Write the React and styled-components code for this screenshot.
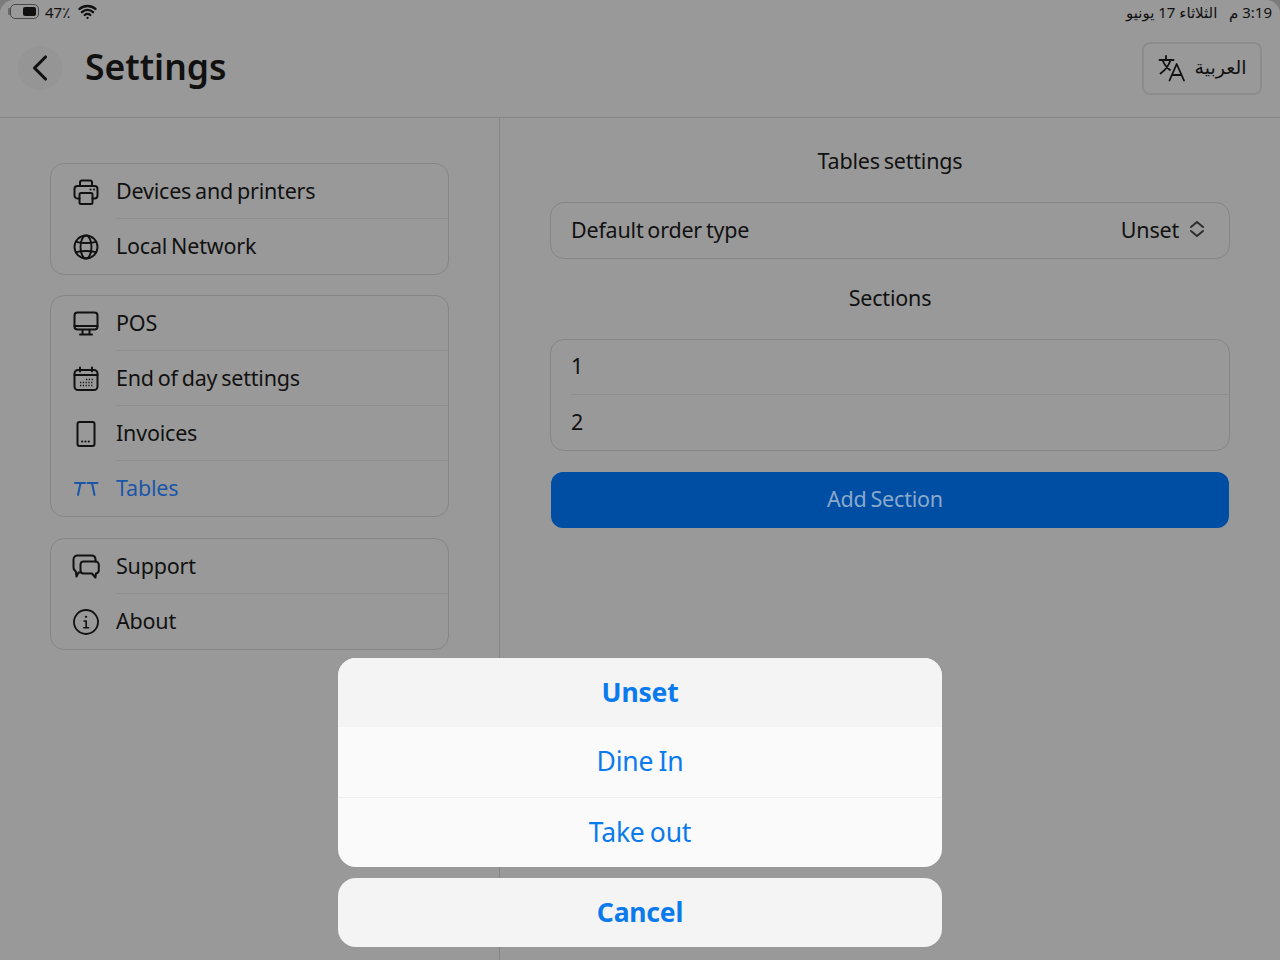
import styled, { createGlobalStyle } from 'styled-components';
import { ChevronLeft, Wifi } from 'lucide-react';

const GlobalStyle = createGlobalStyle`
  html, body {
    margin: 0;
    padding: 0;
    background: #7c7c7c;
  }
  * {
    box-sizing: border-box;
  }
`;

const Icon = ({ children, strokeWidth = 2 }) => (
  <svg width="28" height="28" viewBox="0 0 28 28" fill="none" stroke="currentColor" strokeWidth={strokeWidth} strokeLinecap="round" strokeLinejoin="round">
    {children}
  </svg>
);

const PrinterIcon = () => (
  <Icon>
    <path d="M8 8V4.500c0-1.200.8-2 2-2h8c1.200 0 2 .8 2 2V8" />
    <path d="M7.500 20.500H5.500c-1.800 0-3-1.300-3-3V11c0-1.800 1.300-3 3-3h17c1.800 0 3 1.200 3 3v6.500c0 1.700-1.200 3-3 3h-2" />
    <rect x="7.500" y="15" width="13" height="11" rx="1.500" />
    <path d="M18.500 11.500h.1M22 11.500h.1" />
  </Icon>
);

const GlobeIcon = () => (
  <Icon strokeWidth={1.9}>
    <circle cx="14" cy="14" r="11.500" />
    <ellipse cx="14" cy="14" rx="5.500" ry="11.500" />
    <path d="M4 8.800c6 1.500 14 1.500 20 0M4 19.200c6-1.500 14-1.500 20 0" />
  </Icon>
);

const MonitorIcon = () => (
  <Icon>
    <rect x="2.500" y="2.500" width="23" height="17" rx="3" />
    <path d="M2.500 16h23M10.500 20v4M17.500 20v4M8 24.500h12" />
  </Icon>
);

const CalendarIcon = () => (
  <Icon>
    <rect x="2.500" y="5" width="23" height="20" rx="3.500" />
    <path d="M8 2.500v4M20 2.500v4M2.500 10h23" />
    <path strokeWidth="1.400" strokeLinecap="butt" strokeDasharray="1.200 1.600" d="M8 20.500h13M8 17.500h13M14 14.500h7" />
  </Icon>
);

const TabletIcon = () => (
  <Icon>
    <rect x="5.500" y="2" width="17" height="24" rx="2" />
    <path strokeWidth="1.800" strokeDasharray="0.300 3" d="M10 21.500h8" />
  </Icon>
);

const TableIcon = () => (
  <Icon>
    <path d="M3 8h10M15.500 8h10M8.500 8l-2.500 12M20 8l2.500 12" />
  </Icon>
);

const SupportIcon = () => (
  <Icon>
    <path d="M8 19.500H6.500l-2 4-.7-5.200C2.300 17.500 1.500 16 1.500 14V6.500c0-2.500 2-4 4-4h14c2.500 0 4 1.800 4 4v2" />
    <path d="M11.500 8.500h12c1.800 0 3.300 1.500 3.300 3.300v5.400c0 1.800-1.300 3-2.800 3.300l-.6 4-3.400-4h-8.500c-1.800 0-3-1.500-3-3.300v-5.400c0-1.800 1.200-3.300 3-3.300z" />
  </Icon>
);

const InfoIcon = () => (
  <Icon strokeWidth={1.800}>
    <circle cx="14" cy="14" r="12" />
    <path strokeWidth="2.200" d="M14 8.800h.1" />
    <path strokeWidth="1.600" d="M12 13h2.200v6.500M11.800 19.700h4.800" />
  </Icon>
);

const TranslateIcon = () => (
  <Icon strokeWidth={1.800}>
    <path d="M1.500 6h14M8 2v4M12.500 6C11 11 7.500 16 2.500 19.500M4.500 6c1.500 4 4 7.500 7.500 10" />
    <path d="M11.500 26.500L18.700 10l7.300 16.500M14 21h9.500" />
  </Icon>
);

const UpDownIcon = () => (
  <svg width="16" height="18" viewBox="0 0 16 18" fill="none" stroke="#2e2e2e" strokeWidth="2" strokeLinecap="round" strokeLinejoin="round">
    <path d="M2 7l6-5 6 5M2 11l6 5 6-5" />
  </svg>
);

const navGroups = [
  [
    { label: 'Devices and printers', icon: <PrinterIcon /> },
    { label: 'Local Network', icon: <GlobeIcon /> },
  ],
  [
    { label: 'POS', icon: <MonitorIcon /> },
    { label: 'End of day settings', icon: <CalendarIcon /> },
    { label: 'Invoices', icon: <TabletIcon /> },
    { label: 'Tables', icon: <TableIcon />, active: true },
  ],
  [
    { label: 'Support', icon: <SupportIcon /> },
    { label: 'About', icon: <InfoIcon /> },
  ],
];

function App() {
  return (
    <Screen>
      <GlobalStyle />
      <StatusBar>
        <StatusLeft>
          <Battery>
            <BatteryFill />
          </Battery>
          <span>47٪</span>
          <Wifi size={19} strokeWidth={3} />
        </StatusLeft>
        <StatusClock dir="rtl">3:19 م &nbsp; الثلاثاء 17 يونيو</StatusClock>
      </StatusBar>

      <Header>
        <BackButton>
          <ChevronLeft size={50} strokeWidth={1.7} />
        </BackButton>
        <Title>Settings</Title>
        <LanguageButton>
          <TranslateIcon />
          <LanguageLabel>العربية</LanguageLabel>
        </LanguageButton>
      </Header>

      <Body>
        <Sidebar>
          {navGroups.map((group, i) => (
            <Group key={i}>
              {group.map(item => (
                <NavRow key={item.label} $active={item.active}>
                  <NavIcon>{item.icon}</NavIcon>
                  <NavLabel>{item.label}</NavLabel>
                </NavRow>
              ))}
            </Group>
          ))}
        </Sidebar>

        <Content>
          <SectionTitle>Tables settings</SectionTitle>
          <Group>
            <ValueRow>
              <span>Default order type</span>
              <SelectValue>
                Unset
                <UpDownIcon />
              </SelectValue>
            </ValueRow>
          </Group>
          <SectionTitle>Sections</SectionTitle>
          <Group>
            <ValueRow>1</ValueRow>
            <ValueRow>2</ValueRow>
          </Group>
          <AddButton>Add Section</AddButton>
        </Content>
      </Body>

      <ActionSheet>
        <SheetCard>
          <SheetOption $primary>Unset</SheetOption>
          <SheetOption>Dine In</SheetOption>
          <SheetOption>Take out</SheetOption>
        </SheetCard>
        <SheetCard>
          <SheetOption $primary>Cancel</SheetOption>
        </SheetCard>
      </ActionSheet>
    </Screen>
  );
}

const Screen = styled.div`
  position: relative;
  display: flex;
  flex-direction: column;
  width: 1280px;
  height: 960px;
  overflow: hidden;
  background: #999999;
  border-radius: 14px 14px 0 0;
  color: #111111;
  font-family: 'Noto Sans', 'DejaVu Sans', sans-serif;
  font-size: 21.5px;
  letter-spacing: -0.2px;
  word-spacing: -1.5px;
`;

const StatusBar = styled.div`
  display: flex;
  align-items: center;
  justify-content: space-between;
  height: 25px;
  padding: 0 8px 2px 10px;
  letter-spacing: 0;
  word-spacing: 0;
`;

const StatusLeft = styled.div`
  display: flex;
  align-items: center;
  gap: 6px;
  font-size: 15px;
  svg {
    margin-left: 2px;
  }
`;

const Battery = styled.div`
  position: relative;
  display: flex;
  justify-content: flex-end;
  width: 29px;
  height: 15px;
  padding: 2px;
  border: 1px solid #4a4a4a;
  border-radius: 5px;

  &::before {
    content: '';
    position: absolute;
    top: 3px;
    left: -3px;
    width: 2px;
    height: 7px;
    background: #6a6a6a;
    border-radius: 1px 0 0 1px;
  }
`;

const BatteryFill = styled.div`
  width: 13px;
  background: #111111;
  border-radius: 2px;
`;

const StatusClock = styled.div`
  font-size: 15px;
`;

const Header = styled.header`
  display: flex;
  align-items: center;
  height: 93px;
  padding: 0 18px 6px;
  border-bottom: 1px solid #858585;
`;

const BackButton = styled.div`
  display: flex;
  align-items: center;
  justify-content: center;
  width: 44px;
  height: 44px;
  margin-right: 23px;
  border-radius: 50%;
  background: #959595;
`;

const Title = styled.h1`
  flex: 1;
  margin: 0 0 4px;
  font-size: 35.500px;
  font-weight: 600;
  letter-spacing: 0;
  line-height: 44px;
`;

const LanguageButton = styled.div`
  display: flex;
  align-items: center;
  justify-content: center;
  gap: 9px;
  width: 120px;
  height: 53px;
  border: 2px solid #8c8c8c;
  border-radius: 8px;
`;

const LanguageLabel = styled.span`
  padding-bottom: 2px;
  font-size: 19px;
  letter-spacing: 0;
`;

const Body = styled.div`
  flex: 1;
  display: flex;
`;

const Sidebar = styled.nav`
  display: flex;
  flex-direction: column;
  gap: 20px;
  width: 500px;
  padding: 45px 50px 0;
  border-right: 1px solid #858585;
`;

const Group = styled.div`
  display: flex;
  flex-direction: column;
  border: 1.500px solid #858585;
  border-radius: 14px;

  ${Sidebar} &:last-child {
    margin-top: 1px;
  }
`;

const NavRow = styled.div`
  display: flex;
  align-items: center;
  height: 55px;
  padding-left: 21px;
  color: ${props => (props.$active ? '#1a56a8' : '#111111')};
`;

const NavIcon = styled.div`
  display: flex;
  align-items: center;
  justify-content: center;
  width: 28px;
  height: 28px;
  margin-right: 16px;
`;

const NavLabel = styled.div`
  flex: 1;
  align-self: stretch;
  display: flex;
  align-items: center;
  padding-bottom: 2px;

  ${NavRow}:not(:last-child) & {
    border-bottom: 1px solid #8e8e8e;
  }
`;

const Content = styled.main`
  flex: 1;
  display: flex;
  flex-direction: column;
  padding: 26px 50px 0;
`;

const SectionTitle = styled.div`
  display: flex;
  align-items: center;
  justify-content: center;
  height: 34px;
  margin-bottom: 24px;
  padding-bottom: 2px;

  ${Group} + & {
    margin-top: 22px;
  }
`;

const ValueRow = styled.div`
  display: flex;
  align-items: center;
  justify-content: space-between;
  height: 55px;
  margin-left: 20px;
  padding: 0 24px 3px 0;

  &:not(:last-child) {
    border-bottom: 1px solid #8e8e8e;
  }
`;

const SelectValue = styled.span`
  display: flex;
  align-items: center;
  gap: 10px;
`;

const AddButton = styled.div`
  display: flex;
  align-items: center;
  justify-content: center;
  height: 56px;
  margin: 21px 1px 0;
  padding: 0 10px 3px 0;
  background: #004ea3;
  border-radius: 12px;
  color: #8aa8cc;
`;

const ActionSheet = styled.div`
  position: absolute;
  top: 658px;
  left: 338px;
  display: flex;
  flex-direction: column;
  gap: 11px;
  width: 604px;
`;

const SheetCard = styled.div`
  overflow: hidden;
  background: #fafafa;
  border-radius: 18px;
`;

const SheetOption = styled.div`
  display: flex;
  align-items: center;
  justify-content: center;
  height: ${props => (props.$primary ? '69px' : '70px')};
  padding-bottom: 2px;
  background: ${props => (props.$primary ? '#f4f4f4' : 'transparent')};
  color: #0a7aed;
  font-size: 26.500px;
  font-weight: ${props => (props.$primary ? 700 : 400)};

  & + & + & {
    border-top: 1px solid #efefef;
  }
`;

export default App;
